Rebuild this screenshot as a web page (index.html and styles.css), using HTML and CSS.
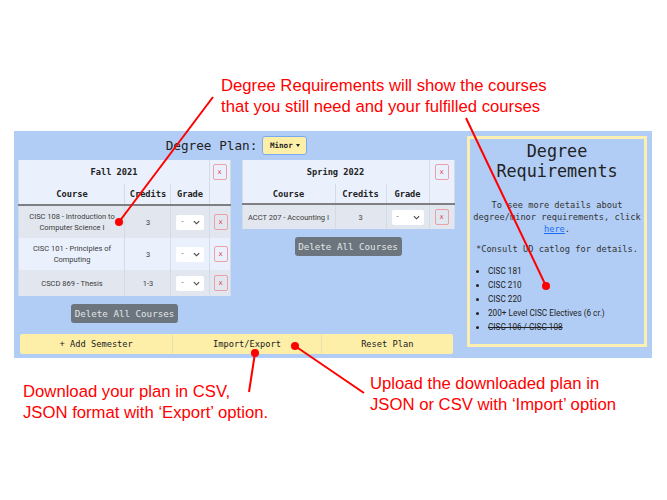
FILE: index.html
```html
<!DOCTYPE html>
<html lang="en">
<head>
<meta charset="utf-8">
<title>Degree Plan</title>
<link rel="stylesheet" href="styles.css">
</head>
<body>
<div class="page">
  <div class="note note-top">Degree Requirements will show the courses<br>that you still need and your fulfilled courses</div>

  <div class="panel">
    <div class="plan">
      <div class="plan-head">
        <span class="plan-title">Degree Plan:</span>
        <button class="minor">Minor<span class="caret"></span></button>
      </div>

      <div class="semesters">
        <div class="sem">
          <table class="card card-fall">
            <colgroup><col class="fc1"><col class="fc2"><col class="fc3"><col class="fc4"></colgroup>
            <thead>
              <tr class="sem-row"><th colspan="3">Fall 2021</th><th><span class="xbtn">x</span></th></tr>
              <tr class="col-row"><th>Course</th><th>Credits</th><th>Grade</th><th></th></tr>
            </thead>
            <tbody>
              <tr><td class="course">CISC 108 - Introduction to Computer Science I</td><td class="cred">3</td><td><span class="grade">-<svg class="chev" viewBox="0 0 8 5"><polyline points="1,1 4,4 7,1"/></svg></span></td><td><span class="xbtn">x</span></td></tr>
              <tr><td class="course">CISC 101 - Principles of Computing</td><td class="cred">3</td><td><span class="grade">-<svg class="chev" viewBox="0 0 8 5"><polyline points="1,1 4,4 7,1"/></svg></span></td><td><span class="xbtn">x</span></td></tr>
              <tr><td class="course">CSCD 869 - Thesis</td><td class="cred">1-3</td><td><span class="grade">-<svg class="chev" viewBox="0 0 8 5"><polyline points="1,1 4,4 7,1"/></svg></span></td><td><span class="xbtn">x</span></td></tr>
            </tbody>
          </table>
          <button class="del-all">Delete All Courses</button>
        </div>

        <div class="sem">
          <table class="card card-spring">
            <colgroup><col class="sc1"><col class="sc2"><col class="sc3"><col class="sc4"></colgroup>
            <thead>
              <tr class="sem-row"><th colspan="3">Spring 2022</th><th><span class="xbtn">x</span></th></tr>
              <tr class="col-row"><th>Course</th><th>Credits</th><th>Grade</th><th></th></tr>
            </thead>
            <tbody>
              <tr><td class="course">ACCT 207 - Accounting I</td><td class="cred">3</td><td><span class="grade">-<svg class="chev" viewBox="0 0 8 5"><polyline points="1,1 4,4 7,1"/></svg></span></td><td><span class="xbtn">x</span></td></tr>
            </tbody>
          </table>
          <button class="del-all">Delete All Courses</button>
        </div>
      </div>

      <div class="actions">
        <button class="act">+ Add Semester</button>
        <button class="act">Import/Export</button>
        <button class="act">Reset Plan</button>
      </div>
    </div>

    <div class="req">
      <h2 class="req-title"><span class="req-line">Degree</span><span class="req-line">Requirements</span></h2>
      <p class="req-text">To see more details about degree/minor requirements, click <a href="#">here</a>.</p>
      <p class="req-text req-consult">*Consult UD catlog for details.</p>
      <ul class="req-list">
        <li>CISC 181</li>
        <li>CISC 210</li>
        <li>CISC 220</li>
        <li>200+ Level CISC Electives (6 cr.)</li>
        <li class="done">CISC 106 / CISC 108</li>
      </ul>
    </div>
  </div>

  <div class="notes-bottom">
    <div class="note note-dl">Download your plan in CSV,<br>JSON format with ‘Export’ option.</div>
    <div class="note note-ul">Upload the downloaded plan in<br>JSON or CSV with ‘Import’ option</div>
  </div>

  <svg class="arrows" width="667" height="500" viewBox="0 0 667 500">
    <g stroke="#ff0000" stroke-width="2" fill="none">
      <line x1="213" y1="97" x2="119" y2="222"/>
      <line x1="466" y1="118" x2="546" y2="286"/>
      <line x1="295" y1="346" x2="364" y2="393"/>
      <line x1="255" y1="353" x2="249" y2="392"/>
    </g>
    <g fill="#ff0000">
      <circle cx="119" cy="222" r="4"/>
      <circle cx="546" cy="286" r="4"/>
      <circle cx="295" cy="346" r="4"/>
      <circle cx="255" cy="353" r="4"/>
    </g>
  </svg>
</div>
</body>
</html>
```

FILE: styles.css
```css
* { box-sizing: border-box; }

body {
  margin: 0;
  background: #ffffff;
  font-family: "Liberation Sans", Arial, sans-serif;
}

.page {
  position: relative;
  width: 667px;
  height: 500px;
  overflow: hidden;
}

/* red annotations */
.note {
  color: #ff0000;
  font-family: "Liberation Sans", Arial, sans-serif;
  font-size: 16.7px;
  line-height: 20.5px;
  white-space: nowrap;
}
.note-top {
  height: 131px;
  padding: 76px 0 0 221px;
}

.notes-bottom {
  display: flex;
  align-items: flex-start;
  margin-top: 16px;
  padding-left: 23px;
}
.note-dl {
  width: 347px;
  margin-top: 8px;
}

/* overlay arrows */
.arrows {
  position: absolute;
  left: 0;
  top: 0;
  pointer-events: none;
}

/* blue app panel */
.panel {
  margin-left: 14px;
  width: 638px;
  background: #b1cdf5;
  display: flex;
  align-items: flex-start;
  gap: 13px;
  padding: 5px 5px 4px 5px;
}

.plan {
  width: 435px;
  display: flex;
  flex-direction: column;
}

.plan-head {
  height: 19px;
  display: flex;
  justify-content: center;
  align-items: center;
  gap: 5px;
}
.plan-title {
  font-family: "DejaVu Sans Mono", monospace;
  font-size: 12.7px;
  color: #222;
}
.minor {
  width: 45px;
  height: 19px;
  padding: 0;
  margin: 0;
  background: #fdefa8;
  border: 1.5px solid #78aaf2;
  border-radius: 3px;
  font-family: "DejaVu Sans Mono", monospace;
  font-size: 7.6px;
  font-weight: bold;
  color: #222;
  display: flex;
  align-items: center;
  justify-content: center;
  gap: 3px;
}
.caret {
  width: 0;
  height: 0;
  border-left: 2.5px solid transparent;
  border-right: 2.5px solid transparent;
  border-top: 3px solid #222;
}

.semesters {
  display: grid;
  grid-template-columns: 211px 212px;
  column-gap: 12px;
  align-items: start;
  margin-top: 5px;
}
.sem {
  display: flex;
  flex-direction: column;
  align-items: center;
}

.card {
  width: 100%;
  table-layout: fixed;
  border-collapse: collapse;
  background: #eaf1fc;
  font-family: "DejaVu Sans Mono", monospace;
}
.fc1 { width: 106px; }
.fc2 { width: 46px; }
.fc3 { width: 38px; }
.fc4 { width: 21px; }
.sc1 { width: 93px; }
.sc2 { width: 51px; }
.sc3 { width: 43px; }
.sc4 { width: 25px; }

.card th,
.card td {
  border-left: 1px solid #d3dbe7;
  border-right: 1px solid #d3dbe7;
  text-align: center;
  vertical-align: middle;
  padding: 0;
}
.card th {
  font-size: 8.7px;
  font-weight: bold;
  color: #222;
}
.sem-row th { height: 24px; }
.col-row th {
  height: 21px;
  border-bottom: 2px solid #7d7f82;
}
.card-spring .col-row th { height: 20px; }

.card tbody tr:nth-child(odd) { background: #e2e7ef; }
.card tbody tr:nth-child(even) { background: #eaf1fc; }
.card td {
  padding: 5px 4px;
  height: 25px;
  font-family: Roboto, "Noto Sans", sans-serif;
  font-size: 7.5px;
  line-height: 11px;
  color: #3a3a3a;
}
.card td.course { padding: 5px 6px; }
.card-spring td { height: 24px; padding-top: 4px; padding-bottom: 4px; }
.card-spring td.course {
  padding: 4px 2px;
  white-space: nowrap;
}

.grade {
  display: flex;
  align-items: center;
  justify-content: space-between;
  height: 15px;
  margin: 0 1px;
  padding: 0 4px 0 5px;
  background: #ffffff;
  border-radius: 2px;
  font-family: Roboto, sans-serif;
  font-size: 7px;
  color: #444;
}
.chev {
  width: 7px;
  height: 5px;
}
.chev polyline {
  fill: none;
  stroke: #444;
  stroke-width: 1.3;
}

.xbtn {
  display: inline-flex;
  align-items: center;
  justify-content: center;
  width: 14px;
  height: 16px;
  border: 1px solid #e9a0a6;
  border-radius: 2px;
  font-family: "DejaVu Sans Mono", monospace;
  font-size: 7px;
  font-weight: normal;
  color: #e0404c;
  vertical-align: middle;
}

.del-all {
  margin-top: 8px;
  width: 107px;
  height: 19px;
  padding: 0;
  border: none;
  border-radius: 3px;
  background: #6c757d;
  color: #e3e6e9;
  font-family: "DejaVu Sans Mono", monospace;
  font-size: 9.2px;
}

.actions {
  display: flex;
  margin: 11px 1px 0 1px;
  height: 20px;
}
.act {
  flex: 1 1 auto;
  height: 20px;
  padding: 0;
  margin: 0;
  background: #fdefa8;
  border: none;
  border-right: 1px solid #e6e0b8;
  font-family: "DejaVu Sans Mono", monospace;
  font-size: 8.7px;
  color: #222;
}
.act:first-child { border-radius: 2px 0 0 2px; }
.act:last-child { border-right: none; border-radius: 0 2px 2px 0; }

/* requirements box */
.req {
  width: 180px;
  height: 211px;
  border: 3px solid #fbefb2;
  background: #b1cdf5;
  padding: 3px 2px 0 2px;
  text-align: center;
  color: #2a2a2a;
}
.req-title {
  margin: 0;
  font-family: "DejaVu Sans Mono", monospace;
  font-weight: normal;
  font-size: 16.8px;
  line-height: 19.5px;
  color: #222;
}
.req-line {
  display: block;
  height: 19.5px;
}
.req-text {
  margin: 18px 0 0 0;
  font-family: "DejaVu Sans Mono", monospace;
  font-size: 8.7px;
  line-height: 12px;
  color: #333;
}
.req-text a {
  color: #1a6ef5;
  text-decoration: underline;
}
.req-consult { margin-top: 8px; }
.req-list {
  margin: 9px 0 0 0;
  padding-left: 16px;
  text-align: left;
  font-family: Roboto, "Noto Sans", sans-serif;
  font-size: 8.2px;
  line-height: 14.1px;
  color: #222;
}
.req-list .done { text-decoration: line-through; }
```
